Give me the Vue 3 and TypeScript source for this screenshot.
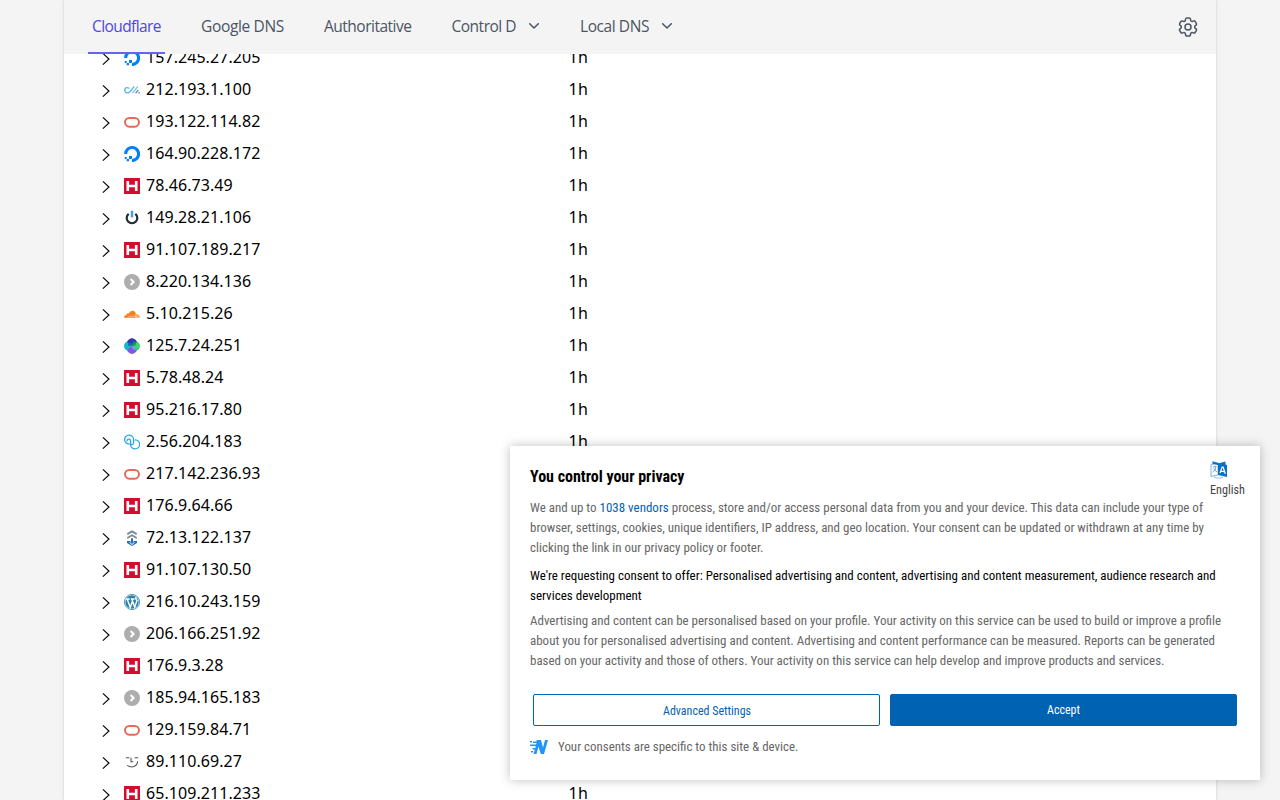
<script setup lang="ts">
interface Tab { label: string; width: number; gap: number; active?: boolean; menu?: boolean }
interface Row { ip: string; icon: string; ttl?: string }

const tabs: Tab[] = [
  { label: 'Cloudflare', width: 69, gap: 32, active: true },
  { label: 'Google DNS', width: 83, gap: 32 },
  { label: 'Authoritative', width: 87.5, gap: 32 },
  { label: 'Control D', width: 64.5, gap: 33, menu: true },
  { label: 'Local DNS', width: 69, gap: 0, menu: true },
]

const rows: Row[] = [
  { ip: '157.245.27.205', icon: 'ocean', ttl: '1h' },
  { ip: '212.193.1.100', icon: 'cw', ttl: '1h' },
  { ip: '193.122.114.82', icon: 'oracle', ttl: '1h' },
  { ip: '164.90.228.172', icon: 'ocean', ttl: '1h' },
  { ip: '78.46.73.49', icon: 'hetzner', ttl: '1h' },
  { ip: '149.28.21.106', icon: 'power', ttl: '1h' },
  { ip: '91.107.189.217', icon: 'hetzner', ttl: '1h' },
  { ip: '8.220.134.136', icon: 'generic', ttl: '1h' },
  { ip: '5.10.215.26', icon: 'cloud', ttl: '1h' },
  { ip: '125.7.24.251', icon: 'petals', ttl: '1h' },
  { ip: '5.78.48.24', icon: 'hetzner', ttl: '1h' },
  { ip: '95.216.17.80', icon: 'hetzner', ttl: '1h' },
  { ip: '2.56.204.183', icon: 'links', ttl: '1h' },
  { ip: '217.142.236.93', icon: 'oracle' },
  { ip: '176.9.64.66', icon: 'hetzner' },
  { ip: '72.13.122.137', icon: 'stack' },
  { ip: '91.107.130.50', icon: 'hetzner' },
  { ip: '216.10.243.159', icon: 'wordpress' },
  { ip: '206.166.251.92', icon: 'generic' },
  { ip: '176.9.3.28', icon: 'hetzner' },
  { ip: '185.94.165.183', icon: 'generic' },
  { ip: '129.159.84.71', icon: 'oracle' },
  { ip: '89.110.69.27', icon: 'face' },
  { ip: '65.109.211.233', icon: 'hetzner', ttl: '1h' },
]

const offer = [
  { text: "We're requesting consent to offer: Personalised advertising and content, advertising and content measurement, audience research and", width: 685.7 },
  { text: 'services development', width: 111.7 },
]
const details = [
  { text: 'Advertising and content can be personalised based on your profile. Your activity on this service can be used to build or improve a profile', width: 691 },
  { text: 'about you for personalised advertising and content. Advertising and content performance can be measured. Reports can be generated', width: 685 },
  { text: 'based on your activity and those of others. Your activity on this service can help develop and improve products and services.', width: 634.5 },
]

// Condenses a single line of text to the given width.
const vFit = (el: HTMLElement, binding: { value: number }) => {
  requestAnimationFrame(() => {
    if (el.dataset.fitted) return
    el.dataset.fitted = '1'
    const natural = el.getBoundingClientRect().width
    el.style.transform = `scaleX(${binding.value / natural})`
    el.style.marginRight = `${binding.value - natural}px`
  })
}
// Distributes the width difference between letters.
const vTrack = (el: HTMLElement, binding: { value: number }) => {
  requestAnimationFrame(() => {
    if (el.dataset.fitted) return
    el.dataset.fitted = '1'
    const natural = el.getBoundingClientRect().width
    el.style.letterSpacing = `${(binding.value - natural) / (el.textContent ?? ' ').length}px`
  })
}
</script>

<template>
  <div class="page">
    <div class="panel">
      <nav class="tabs">
        <a v-for="tab in tabs" :key="tab.label" class="tab" :class="{ active: tab.active }" :style="{ marginRight: tab.gap + 'px' }">
          <span v-track="tab.width" class="tab-label">{{ tab.label }}</span>
          <svg v-if="tab.menu" class="caret" viewBox="0 0 10 6"><path d="M.7.7 5 5 9.3.7" /></svg>
        </a>
        <svg class="gear" viewBox="0 0 24 24">
          <path d="M9.600 3.900c.1-.5.600-.9 1.100-.9h2.600c.5 0 1 .4 1.100.9l.2 1.300c.1.400.3.700.6.900l.2.100c.3.200.7.300 1.100.1l1.200-.4c.5-.2 1.100 0 1.400.5l1.300 2.200c.3.500.2 1.100-.3 1.400l-1 .8c-.3.300-.4.600-.4 1v.3c0 .4.100.7.4 1l1 .8c.4.400.5 1 .3 1.400l-1.300 2.200c-.3.500-.9.700-1.400.5l-1.200-.4c-.4-.1-.8-.1-1.100.1l-.2.100c-.3.200-.5.500-.6.900l-.2 1.300c-.1.500-.6.900-1.100.9h-2.600c-.5 0-1-.4-1.100-.9l-.2-1.300c-.1-.4-.3-.7-.6-.9l-.2-.1c-.3-.2-.7-.3-1.100-.1l-1.200.4c-.5.200-1.100 0-1.400-.5L3.600 15.400c-.3-.5-.2-1.100.3-1.400l1-.8c.3-.3.4-.6.4-1v-.3c0-.4-.1-.7-.4-1l-1-.8c-.4-.4-.5-1-.3-1.400l1.300-2.200c.3-.5.900-.7 1.400-.5l1.200.4c.4.100.8.100 1.100-.1l.2-.1c.3-.2.500-.5.600-.9z" />
          <circle cx="12" cy="12" r="3" />
        </svg>
      </nav>
      <div class="records">
        <div v-for="row in rows" :key="row.ip" class="record">
          <svg class="expand" viewBox="0 0 8 14"><path d="M.9 1.300 7 7 .9 12.700" /></svg>
          <svg class="provider" viewBox="0 0 16 16">
            <g v-if="row.icon === 'ocean'">
              <path d="M8 14.500A6.500 6.500 0 1 0 1.600 8" fill="none" stroke="#0080ff" stroke-width="3.100" />
              <path fill="#0080ff" d="M5 10h3v3H5zM2.700 13H5v2.300H2.700zM.8 11h1.900v2H.8z" />
            </g>
            <g v-else-if="row.icon === 'cw'" fill="none" stroke-width="1.400" stroke-linecap="round">
              <path d="M5 6.100Q.8 4.500.8 8t3.400 2.700Q6.200 10.400 9.800 4.900" stroke="#58b8e4" />
              <path d="m8.800 10.600 4.600-5.500" stroke="#79c4e8" /><path d="m12 10.700 1.900-2.300M15 10.900l.3-.4" stroke="#7189cc" />
            </g>
            <rect v-else-if="row.icon === 'oracle'" x="1" y="3.900" width="14" height="8.800" rx="4.400" fill="none" stroke="#e56a58" stroke-width="2" />
            <g v-else-if="row.icon === 'hetzner'"><path fill="#d50c2d" d="M0 0h16v16H0z" /><path fill="#fff" d="M2.500 3h2.600v3.700h5.800V3h2.600v10h-2.600V9.300H5.100V13H2.500z" /></g>
            <g v-else-if="row.icon === 'power'" fill="none">
              <path d="M4.700 3.800a5.300 5.300 0 1 0 6.600 0" stroke="#222d38" stroke-width="2.200" /><path d="M8 .8v6.600" stroke="#36a3ef" stroke-width="2.400" />
            </g>
            <g v-else-if="row.icon === 'generic'"><circle cx="8" cy="8" r="8" fill="#aeaeae" /><path d="m6.600 5 3 3-3 3" fill="none" stroke="#fff" stroke-width="2" /></g>
            <g v-else-if="row.icon === 'cloud'">
              <path fill="#f6821f" d="M.1 11.700c-.2-1.700 1-2.600 2.500-2.600C2.200 7.500 4 6.700 5 7.400c1.300-3.700 6.300-3.400 6.800.4l-.7 3.900z" />
              <path fill="#fbad41" d="M11.900 8.200c2.400-.4 4.300 1 4 3.500h-4.600c-.5-.8-.2-1.200 2.400-1.400-.8-.2-1.900-.2-2.500 0z" /><path d="m4 10.400 7-.2" stroke="#fff" stroke-width=".4" />
            </g>
            <g v-else-if="row.icon === 'petals'">
              <circle cx="4.500" cy="8" r="4.500" fill="#17b8cb" /><circle cx="11.500" cy="8" r="4.500" fill="#35d873" />
              <path fill="#303bb4" d="M8 0q4 1 5 4L8 8 3 4q1-3 5-4z" /><path fill="#8258dc" d="M8 16q-4-1-5-4l5-4 5 4q-1 3-5 4z" />
              <path fill="#1571b4" d="M4 5Q8 4 8 8l-4-.2z" /><path fill="#26963c" d="M8 8q-.2-4.500 4-3.800Q12.500 8.500 8 8z" /><path fill="#62abe4" d="M8 8q4 0 3.800 4.200Q8 12 8 8z" />
            </g>
            <g v-else-if="row.icon === 'links'" fill="none" stroke="#29aae1" stroke-width="1.300" stroke-linecap="round">
              <path d="M5.200 10.100A4.500 4.500 0 1 1 9.600 5.600V9a1.700 1.700 0 0 1-3.300.4" /><path d="M11.200 5.900a4.500 4.500 0 1 1-4.600 4.500V7A1.800 1.800 0 0 0 3 7" />
            </g>
            <g v-else-if="row.icon === 'stack'">
              <path d="m3.300 4.100 4.700-2.700 4.700 2.700M3.300 8l4.700-2.700L12.700 8" fill="none" stroke="#7c8997" stroke-width="1.800" />
              <path fill="#236fc0" d="M3 11h3v1.300H5L8 15l3-2.700h-1V11h3v2l-5 3-5-3z" /><path fill="#236fc0" d="M7 8.300h2v3.200h1.700L8 14l-2.700-2.500H7z" />
            </g>
            <g v-else-if="row.icon === 'wordpress'">
              <circle cx="8" cy="8" r="7.600" fill="#fff" stroke="#2b80a8" stroke-width=".8" /><circle cx="8" cy="8" r="6.700" fill="#2b80a8" />
              <path d="M1.800 5h3.900M6.800 5h3.800M3.100 5l3.200 8.500L8.500 7 10.700 13.200 13 6.500Q11 4.800 12.200 2.900M7.700 5 8.500 7" fill="none" stroke="#fff" stroke-width="1.400" />
            </g>
            <g v-else fill="none" stroke="#555" stroke-width="1.100">
              <path d="M1.800 3.700h3.600M10.600 3.700h3.600M7 3.800v4h2.200M3.100 11.400q5 3.400 9.200-.4 1-1.200 1.300-3.600" />
            </g>
          </svg>
          <span class="ip">{{ row.ip }}</span>
          <span v-if="row.ttl" class="ttl">{{ row.ttl }}</span>
        </div>
      </div>
    </div>

    <section class="consent">
      <div class="language">
        <svg viewBox="0 0 18 18">
          <path fill="#fff" stroke="#5b9ed8" stroke-width=".8" d="M1 3.500 8 1.800V14L1 15.500z" />
          <path fill="#0870c9" d="m2.500.3 6.500 2 6.500-1.800v3l1.500.4v12l-9-2V4L2.500 3z" />
          <path d="m3 6 3-.8q0 4-3.500 6M3.500 7.200 6.800 11" fill="none" stroke="#5b9ed8" stroke-width=".9" />
          <path d="m10 12 2.200-6h.9l2.200 6.800M10.900 10.200l3.600.4" fill="none" stroke="#fff" stroke-width="1.200" />
          <path d="M4 16.200q5 2 9 .2" fill="none" stroke="#85b9e5" stroke-width=".9" />
        </svg>
        <span v-fit="35" class="fit">English</span>
      </div>
      <h2><span v-fit="154.500" class="fit">You control your privacy</span></h2>
      <p class="intro">
        <span v-fit="673" class="fit">We and up to <a>1038 vendors</a> process, store and/or access personal data from you and your device. This data can include your type of</span>
        <span v-fit="674" class="fit">browser, settings, cookies, unique identifiers, IP address, and geo location. Your consent can be updated or withdrawn at any time by</span>
        <span v-fit="233.500" class="fit">clicking the link in our privacy policy or footer.</span>
      </p>
      <p class="offer"><span v-for="line in offer" :key="line.text" v-fit="line.width" class="fit">{{ line.text }}</span></p>
      <p class="details"><span v-for="line in details" :key="line.text" v-fit="line.width" class="fit">{{ line.text }}</span></p>
      <div class="actions">
        <button class="outline"><span v-fit="88" class="fit">Advanced Settings</span></button>
        <button class="solid"><span v-fit="33" class="fit">Accept</span></button>
      </div>
      <footer>
        <svg viewBox="0 0 18 14">
          <path fill="#2196f3" d="M6.500 0H11l2 7.500L15 0h3l-4 14h-3.200L8.500 6.700 6.500 14h-3l1.300-4.500H2.500V8h2.800l.5-2H0V4.500h6L6.500 3H3V1.500h3.700zM0 1h2v1.500H0zM1 11h2v1.500H1z" />
        </svg>
        <span v-fit="240.500" class="fit">Your consents are specific to this site &amp; device.</span>
      </footer>
    </section>
  </div>
</template>

<style>
body { overflow: hidden; background: #f4f4f4; }
</style>

<style scoped>
.page { height: 800px; overflow: hidden; background: #f4f4f4; font-family: "Noto Sans", "Open Sans", sans-serif; }
.panel { width: 1152px; height: 800px; margin: 0 auto; background: #fff; box-shadow: 0 0 3px rgba(0, 0, 0, .16); }
.tabs { position: relative; z-index: 1; display: flex; height: 54px; padding: 0 18px 0 24px; box-sizing: border-box; background: #f4f4f4; }
.tab { display: flex; height: 54px; box-sizing: border-box; padding: 0 4px; border-bottom: 2px solid transparent; color: #4b5563; font-family: "Open Sans", sans-serif; font-size: 15.5px; line-height: 52px; white-space: nowrap; }
.tab.active { color: #4f46e5; border-color: #6366f1; }
.caret { width: 10px; height: 6px; margin: 23px 0 0 13px; fill: none; stroke: #4b5563; stroke-width: 1.5; stroke-linecap: round; stroke-linejoin: round; }
.gear { width: 24px; height: 24px; margin: 15px -2px 0 auto; fill: none; stroke: #4b5563; stroke-width: 1.5; }
.records { margin-top: -12px; }
.record { display: flex; height: 32px; align-items: center; color: #000; font-size: 16px; line-height: 32px; }
.expand { width: 8px; height: 14px; margin: 2px 0 0 38px; fill: none; stroke: #000; stroke-width: 1.15; }
.provider { width: 16px; height: 16px; margin-left: 14px; }
.ip { width: 422.6px; margin: -3px 0 0 6px; letter-spacing: .06px; }
.ttl { margin-top: -3px; letter-spacing: .2px; }
.consent { position: absolute; z-index: 2; left: 510px; top: 446px; width: 750px; height: 334px; padding: 20px; box-sizing: border-box; background: #fff; box-shadow: 0 0 10px rgba(0, 0, 0, .25); color: #666; font: 12.5px/20px Roboto, sans-serif; font-stretch: 75%; }
.fit { display: block; width: max-content; white-space: nowrap; transform-origin: 0 50%; }
h2 { margin: 0; color: #000; font-size: 16px; font-weight: 700; line-height: 21px; }
p { margin: 0; }
.intro { margin-top: 11px; }
.intro a { color: #0062b3; }
.offer { margin-top: 8px; color: #000; }
.details { margin-top: 5px; }
.language { position: absolute; left: 700px; top: 15px; color: #444; }
.language svg { display: block; width: 18px; height: 18px; }
.language span { margin-top: 1px; }
.actions { display: flex; gap: 10px; margin: 23px 3px 0; }
button { display: flex; flex: 1; height: 32px; align-items: center; justify-content: center; padding: 0; border: 1px solid #0062b3; border-radius: 2px; background: #fff; color: #0062b3; font: inherit; font-stretch: inherit; }
.outline { padding-top: 2px; box-sizing: border-box; }
.solid { background: #0062b3; color: #fff; font-weight: 450; box-sizing: border-box; }
footer { display: flex; align-items: center; margin-top: 11px; }
footer svg { width: 18px; height: 14px; margin-right: 10px; }
</style>
